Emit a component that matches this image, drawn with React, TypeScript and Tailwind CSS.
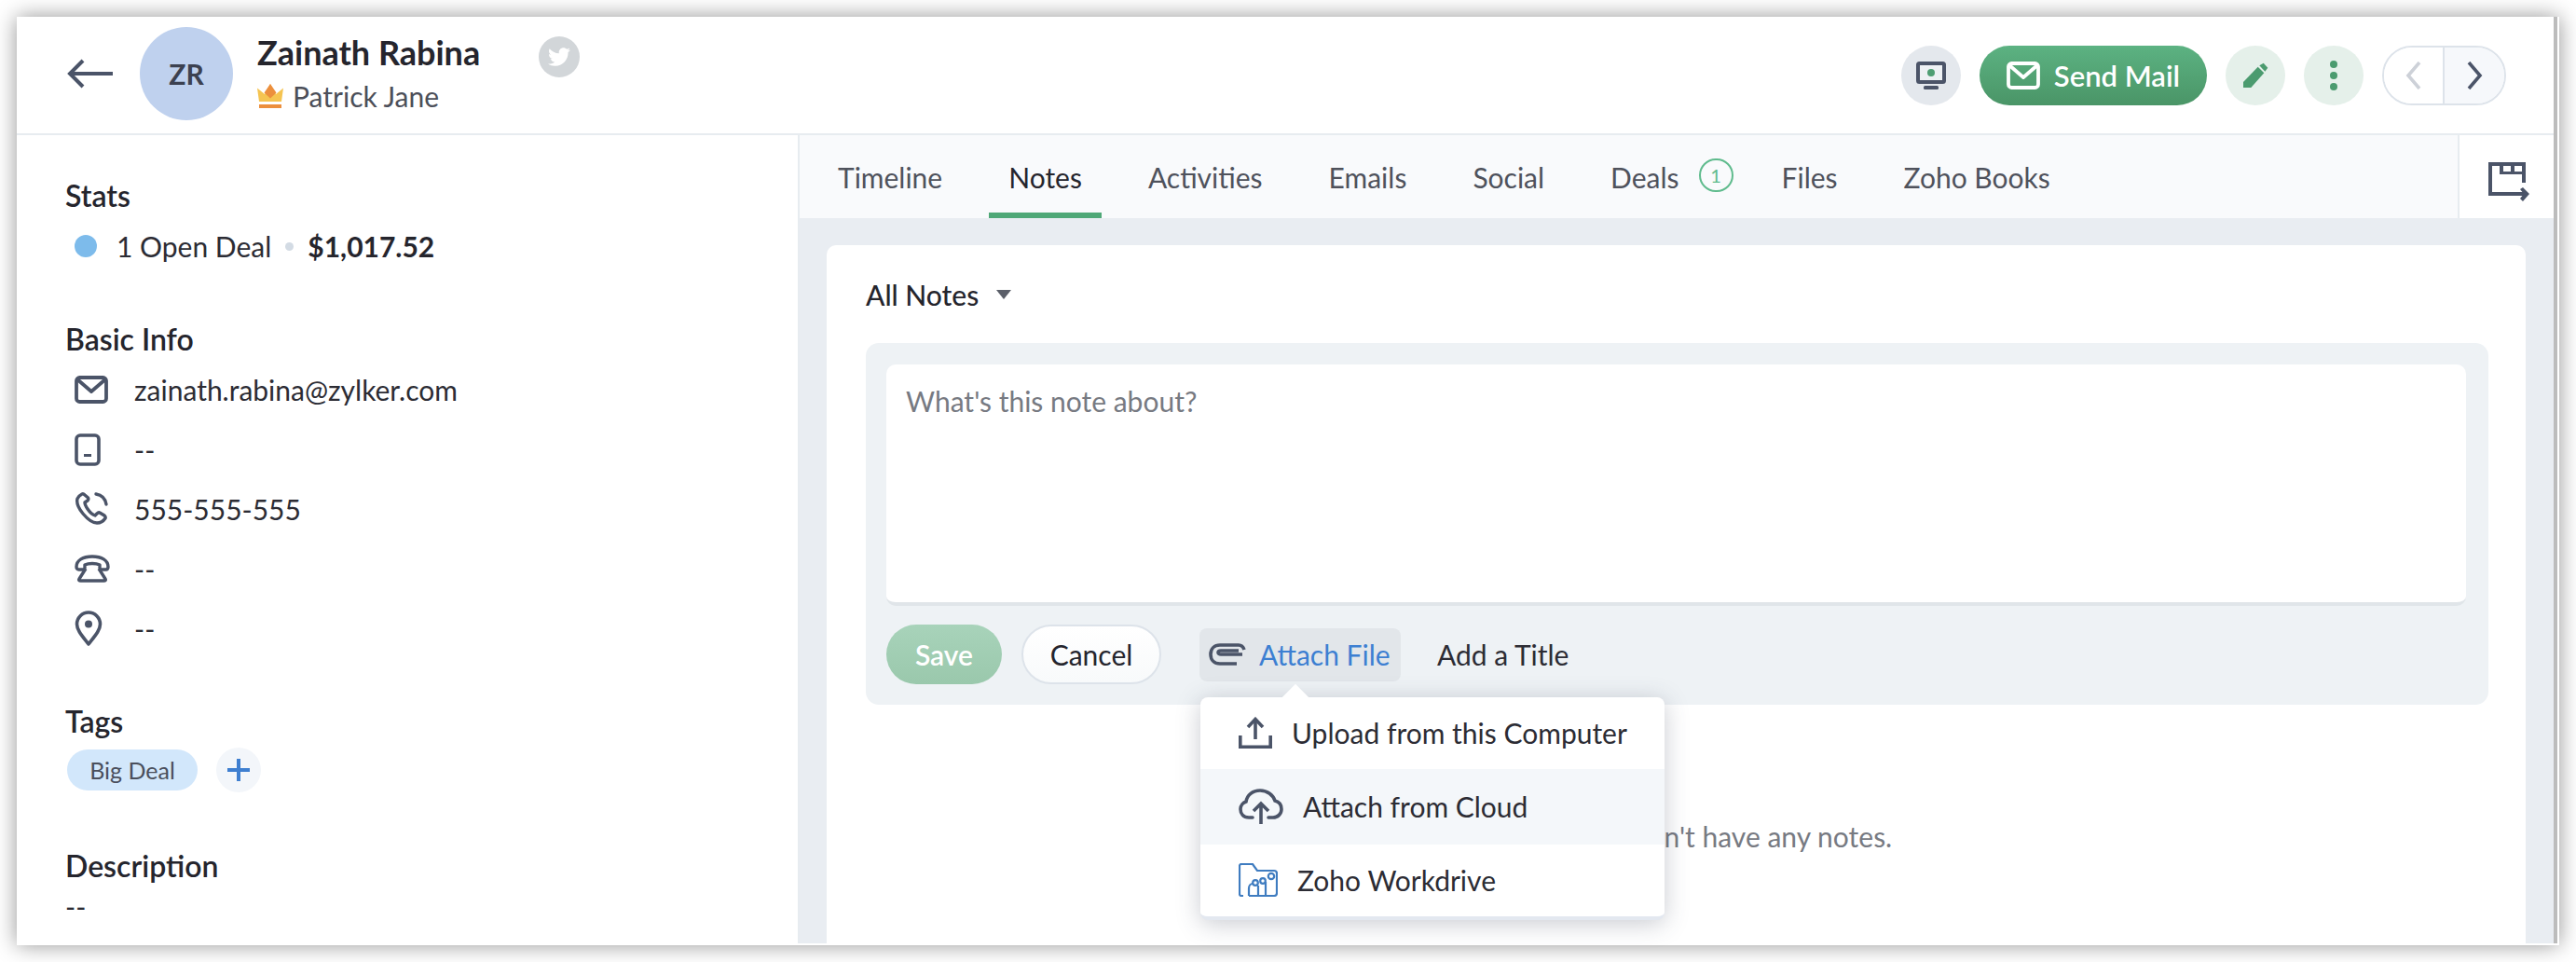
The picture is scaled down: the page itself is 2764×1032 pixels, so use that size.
import { FaTwitter } from "react-icons/fa";

const tabs = ["Timeline", "Notes", "Activities", "Emails", "Social", "Deals", "Files", "Zoho Books"];

function ArrowLeftIcon() {
  return (
    <svg width="50" height="32" viewBox="0 0 50 32" fill="none" stroke="#4b5468" strokeWidth="4">
      <path d="M50 16H4M18 2 4 16l14 14" />
    </svg>
  );
}

function CrownIcon() {
  return (
    <svg width="28" height="26" viewBox="0 0 28 26">
      <path d="M0 4.5 8 11l6-11 6 11 8-6.5L26 19H2z" fill="#f5c451" />
      <path d="M14 0l6.5 9.500L14 15.500 7.500 9.500z" fill="#ec8f3d" />
      <rect x="2" y="22" width="24" height="4" fill="#ec8f3d" />
    </svg>
  );
}

function MailIcon({ color }: { color: string }) {
  return (
    <svg width="36" height="30" viewBox="0 0 36 30" fill="none" stroke={color} strokeWidth="3.8" strokeLinejoin="round">
      <rect x="2" y="2" width="32" height="26" rx="3.500" />
      <path d="M3 4l15 13L33 4" />
    </svg>
  );
}

function MobileIcon() {
  return (
    <svg width="28" height="35" viewBox="0 0 28 35" fill="none" stroke="#4b5468" strokeWidth="3.6">
      <rect x="2" y="2" width="24" height="31" rx="4" />
      <rect x="10" y="22" width="8" height="3" fill="#4b5468" strokeWidth="0" />
    </svg>
  );
}

function PhoneIcon() {
  return (
    <svg width="36" height="36" viewBox="0 0 36 36" fill="none" stroke="#4b5468" strokeWidth="3.4" strokeLinecap="round" strokeLinejoin="round">
      <path d="M3 7c-1 4 1 10 6 16s11 10 15 10c4 0 7-2 9-5 .5-1 0-2-1-3l-5-3c-1-.5-2 0-3 1l-2 2c-3-1-6-4-8-7-2-3-3-5-3-7l3-2c1-1 1-2 .5-3L11 3C10 2 9 1.500 8 2 6 3 4 5 3 7z" />
      <path d="M23 2c6 1 10 5 11 11" />
    </svg>
  );
}

function TelephoneIcon() {
  return (
    <svg width="38" height="30" viewBox="0 0 38 30" fill="none" stroke="#4b5468" strokeWidth="3.4" strokeLinejoin="round">
      <path d="M2 13C2 6 9 2 19 2s17 4 17 11c0 2-1 3-2.500 3H29c-1 0-2-1-2-2v-3c-2-1-5-1.500-8-1.500s-6 .5-8 1.500v3c0 1-1 2-2 2H4.500C3 16 2 15 2 13z" />
      <path d="M12 15 5 26c-1 1.500 0 2 1.500 2h25c1.500 0 2.500-.5 1.500-2l-7-11" />
    </svg>
  );
}

function PinIcon() {
  return (
    <svg width="30" height="38" viewBox="0 0 30 38" fill="none" stroke="#4b5468" strokeWidth="3.6" strokeLinejoin="round">
      <path d="M15 36C8 27 2.500 21 2.500 14.500a12.500 12.500 0 0 1 25 0C27.500 21 22 27 15 36z" />
      <circle cx="15" cy="14.500" r="4" fill="#4b5468" stroke="none" />
    </svg>
  );
}

function MonitorIcon() {
  return (
    <svg width="32" height="30" viewBox="0 0 32 30">
      <rect x="2" y="2" width="28" height="20" fill="#eef1f4" stroke="#4b5468" strokeWidth="4" rx="1.500" />
      <circle cx="16" cy="12" r="4" fill="#4f9e73" />
      <rect x="8" y="26" width="16" height="4" rx="1.500" fill="#4b5468" />
    </svg>
  );
}

function PencilIcon() {
  return (
    <svg width="27" height="27" viewBox="0 0 27 27" fill="#4b9b6f">
      <path d="M0 21 15.700 4.700l6.600 6.600L8.300 27H0z" />
      <path d="M17.300 3.300 21.700.7l4.600 5-3 4z" />
    </svg>
  );
}

function DotsIcon() {
  return (
    <svg width="8" height="32" viewBox="0 0 8 32" fill="#4b9b6f">
      <circle cx="4" cy="4" r="4" />
      <circle cx="4" cy="16" r="4" />
      <circle cx="4" cy="28" r="4" />
    </svg>
  );
}

function ChevronIcon({ color, flip }: { color: string; flip?: boolean }) {
  return (
    <svg width="18" height="30" viewBox="0 0 18 30" fill="none" stroke={color} strokeWidth="3.6">
      <path d={flip ? "M15 1 3 15l12 14" : "M3 1l12 14L3 29"} />
    </svg>
  );
}

function ExportIcon() {
  return (
    <svg width="44" height="42" viewBox="0 0 44 42">
      <path
        fillRule="evenodd"
        fill="#4b5468"
        d="M0 0h40v22h-4v-9H12V4H4v28h34v4H0zM16 4v6h8V4zM28 4v6h8V4z"
      />
      <path d="M34 29l3-2 7 7-7 8-3-3 4-5z" fill="#4b5468" />
    </svg>
  );
}

function PaperclipIcon() {
  return (
    <svg width="40" height="24" viewBox="0 0 40 24" fill="none" stroke="#4b5468" strokeWidth="3.6">
      <path d="M38 7C37 4 35 2 32 2H12C6 2 2 6 2 12s4 10 10 10h18" />
      <path d="M36 12H13c-2 0-3-1-3-2s1-2 3-2h19" />
    </svg>
  );
}

function UploadIcon() {
  return (
    <svg width="36" height="34" viewBox="0 0 36 34" fill="none" stroke="#4b5468" strokeWidth="3.6">
      <path d="M1.800 20v12.200h32.400V20" />
      <path d="M18 24V3" />
      <path d="M10 11l8-8.500 8 8.500" />
    </svg>
  );
}

function CloudIcon() {
  return (
    <svg width="48" height="38" viewBox="0 0 48 38" fill="none" stroke="#4b5468" strokeWidth="3.6">
      <path d="M15 31h-4C5 31 2 27 2 22c0-4 3-7 6-8C9 7 15 2 23 2s14 5 16 11c4 1 7 4 7 9 0 5-4 9-9 9h-5" strokeLinecap="round" />
      <path d="M24 38V17M16 24l8-8 8 8" />
    </svg>
  );
}

function FolderIcon() {
  return (
    <svg width="42" height="36" viewBox="0 0 42 36" fill="none" stroke="#3f7cc0" strokeWidth="2.200">
      <path d="M5 35H3a2 2 0 0 1-2-2V3a2 2 0 0 1 2-2h12l5 7h18a3 3 0 0 1 3 3v21a3 3 0 0 1-3 3H11" />
      <path d="M11 35V27c0-3 2-5 4-5M21 35V24M29 35V20M11 35h19" />
      <circle cx="18" cy="21" r="2.800" />
      <circle cx="26" cy="19" r="2.800" />
      <circle cx="35" cy="14" r="3.200" />
    </svg>
  );
}

function InfoRow({ icon, children }: { icon: React.ReactNode; children: React.ReactNode }) {
  return (
    <div className="flex h-9 items-center">
      <div className="flex w-[74px] pl-[10px]">{icon}</div>
      <span>{children}</span>
    </div>
  );
}

function Heading({ children, className }: { children: React.ReactNode; className?: string }) {
  return <h3 className={`h-9 text-[32px] leading-9 font-semibold text-[#25252d] ${className}`}>{children}</h3>;
}

export default function App() {
  return (
    <div className="h-[1032px] w-[2764px] overflow-hidden bg-white pt-[18px] pl-[18px] font-[family-name:Lato,sans-serif] text-[30px] leading-9 text-[#2c2c34]">
      <div className="flex h-[996px] w-[2728px] bg-white pr-[2px] pb-[2px] shadow-[0_0_22px_rgba(0,0,0,0.42)]">
        <div className="flex min-w-0 flex-1 flex-col border-r-4 border-[#bcbcbc]">
          <header className="flex h-[127px] shrink-0 items-center border-b-2 border-[#e7ecf0] pr-[51px] pb-[4px] pl-[53px]">
            <ArrowLeftIcon />
            <div className="ml-[29px] flex h-[100px] w-[100px] items-center justify-center rounded-full bg-[#bfd1ee] text-[30px] font-bold text-[#3c4150]">
              ZR
            </div>
            <div className="ml-[26px]">
              <div className="-mt-[2px] text-[36px] leading-[42px] font-bold text-[#25252d]">Zainath Rabina</div>
              <div className="mt-[8px] flex items-center gap-[10px] text-[#4c4f59]">
                <CrownIcon />
                Patrick Jane
              </div>
            </div>
            <div className="mb-[36px] ml-[63px] flex h-11 w-11 items-center justify-center rounded-full bg-[#d2d6d9] text-white">
              <FaTwitter size={24} />
            </div>
            <div className="mt-[4px] ml-auto flex items-center">
              <button className="flex h-16 w-16 items-center justify-center rounded-full bg-[#e4e8ed]">
                <MonitorIcon />
              </button>
              <button className="ml-5 flex h-16 w-[244px] items-center justify-center gap-[15px] rounded-full bg-gradient-to-b from-[#5cb282] to-[#4a9567] text-[31px] font-semibold text-white">
                <MailIcon color="#fff" />
                Send Mail
              </button>
              <button className="ml-5 flex h-16 w-16 items-center justify-center rounded-full bg-[#e5f0ea]">
                <PencilIcon />
              </button>
              <button className="ml-5 flex h-16 w-16 items-center justify-center rounded-full bg-[#e5f0ea]">
                <DotsIcon />
              </button>
              <div className="ml-5 flex h-16 w-[133px] overflow-hidden rounded-full border-2 border-[#dde3ea]">
                <div className="flex w-[65px] items-center justify-center border-r-2 border-[#dde3ea] bg-white">
                  <ChevronIcon color="#cdd1d8" flip />
                </div>
                <div className="flex flex-1 items-center justify-center bg-[#f6f8fb]">
                  <ChevronIcon color="#4b5468" />
                </div>
              </div>
            </div>
          </header>

          <div className="flex min-h-0 flex-1">
            <aside className="w-[840px] shrink-0 border-r-2 border-[#e7ecf0] pt-[47px] pl-[52px]">
              <Heading>Stats</Heading>
              <div className="mt-[18px] flex h-9 items-center pl-[10px]">
                <span className="h-6 w-6 rounded-full bg-[#7dbbeb]" />
                <span className="ml-[21px]">1 Open Deal</span>
                <span className="mx-[15px] h-[9px] w-[9px] rounded-full bg-[#d3dbe4]" />
                <span className="font-bold text-[#25252d]">$1,017.52</span>
              </div>

              <Heading className="mt-16">Basic Info</Heading>
              <div className="mt-[18px] flex flex-col gap-7">
                <InfoRow icon={<MailIcon color="#4b5468" />}>zainath.rabina@zylker.com</InfoRow>
                <InfoRow icon={<MobileIcon />}>--</InfoRow>
                <InfoRow icon={<PhoneIcon />}>555-555-555</InfoRow>
                <InfoRow icon={<TelephoneIcon />}>--</InfoRow>
                <InfoRow icon={<PinIcon />}>--</InfoRow>
              </div>

              <Heading className="mt-16">Tags</Heading>
              <div className="mt-[10px] ml-[2px] flex items-center gap-5">
                <span className="flex h-11 w-[140px] items-center justify-center rounded-full bg-[#d2e7fb] text-[25px] text-[#4a4f5c]">
                  Big Deal
                </span>
                <button className="flex h-12 w-12 items-center justify-center rounded-full bg-[#f3f6fa]">
                  <svg width="26" height="26" viewBox="0 0 26 26" stroke="#3f7fd0" strokeWidth="4">
                    <path d="M13 1v24M1 13h24" />
                  </svg>
                </button>
              </div>

              <Heading className="mt-[61px]">Description</Heading>
              <div className="mt-[7px]">--</div>
            </aside>

            <section className="flex min-w-0 flex-1 flex-col">
              <nav className="flex h-[89px] shrink-0">
                <div className="flex flex-1 gap-[29px] bg-[#f9fafc] pl-5">
                  {tabs.map((tab) => (
                    <div
                      key={tab}
                      className={
                        tab === "Notes"
                          ? "flex items-center border-b-[6px] border-[#4fa877] px-[21px] pt-[6px] text-[#25252d]"
                          : "flex items-center border-b-[6px] border-transparent px-[21px] pt-[6px] text-[#4f525c]"
                      }
                    >
                      {tab}
                      {tab === "Deals" && (
                        <span className="mb-[4px] ml-[21px] -mr-[19px] flex h-9 w-[37px] items-center justify-center rounded-full border-2 border-[#5fbb8d] text-[20px] leading-none text-[#5fbb8d]">
                          1
                        </span>
                      )}
                    </div>
                  ))}
                </div>
                <div className="flex w-[103px] items-center justify-center border-l-2 border-[#e7ecf0] bg-white pt-[11px] pl-[4px]">
                  <ExportIcon />
                </div>
              </nav>

              <div className="flex min-h-0 flex-1 bg-[#e9edf2] pt-[29px] pr-[30px] pl-[29px]">
                <div className="flex-1 rounded-t-[10px] bg-white pt-[35px] pr-10 pl-[42px]">
                  <div className="flex h-9 items-center font-medium text-[#25252d]">
                    All Notes
                    <svg className="ml-[19px]" width="16" height="10" viewBox="0 0 16 10" fill="#5b5f69">
                      <path d="M0 0h16L8 10z" />
                    </svg>
                  </div>

                  <div className="mt-[34px] rounded-[14px] bg-[#eef2f5] pt-[23px] pr-[24px] pb-[22px] pl-[22px]">
                    <div className="h-[259px] rounded-[10px] border-b-4 border-[#e0e5e9] bg-white px-[21px] pt-[21px] text-[#777a82]">
                      What's this note about?
                    </div>
                    <div className="mt-5 flex h-16 items-center">
                      <button className="h-16 w-[124px] rounded-full bg-gradient-to-b from-[#a8d3ba] to-[#9ac8ac] font-semibold text-white">
                        Save
                      </button>
                      <button className="ml-[21px] h-16 w-[150px] rounded-full border-2 border-[#dde3ea] bg-gradient-to-b from-white to-[#f8fafb] text-[#25252d]">
                        Cancel
                      </button>
                      <div className="relative ml-[41px]">
                        <button className="flex h-[57px] w-[216px] items-center gap-[14px] rounded-[8px] bg-[#e2e6ea] pl-[10px] text-[#3c7fd2]">
                          <PaperclipIcon />
                          Attach File
                        </button>
                        <div className="absolute top-[74px] left-px z-10 w-[498px] rounded-[8px] border-b-4 border-[#e3e8f0] bg-white shadow-[0_4px_26px_rgba(60,70,90,0.28)]">
                          <div className="absolute -top-[10px] left-[92px] h-5 w-5 rotate-45 bg-white" />
                          <div className="relative flex h-[77px] items-center gap-[21px] pl-[41px]">
                            <UploadIcon />
                            Upload from this Computer
                          </div>
                          <div className="flex h-[81px] items-center gap-[21px] bg-[#f4f7fa] pl-[41px]">
                            <CloudIcon />
                            Attach from Cloud
                          </div>
                          <div className="flex h-[77px] items-center gap-[21px] pl-[41px]">
                            <FolderIcon />
                            Zoho Workdrive
                          </div>
                        </div>
                      </div>
                      <span className="ml-[39px]">Add a Title</span>
                    </div>
                  </div>

                  <p className="mt-[123px] pr-[14px] text-center text-[#777a82]">This contact doesn't have any notes.</p>
                </div>
              </div>
            </section>
          </div>
        </div>
      </div>
    </div>
  );
}
